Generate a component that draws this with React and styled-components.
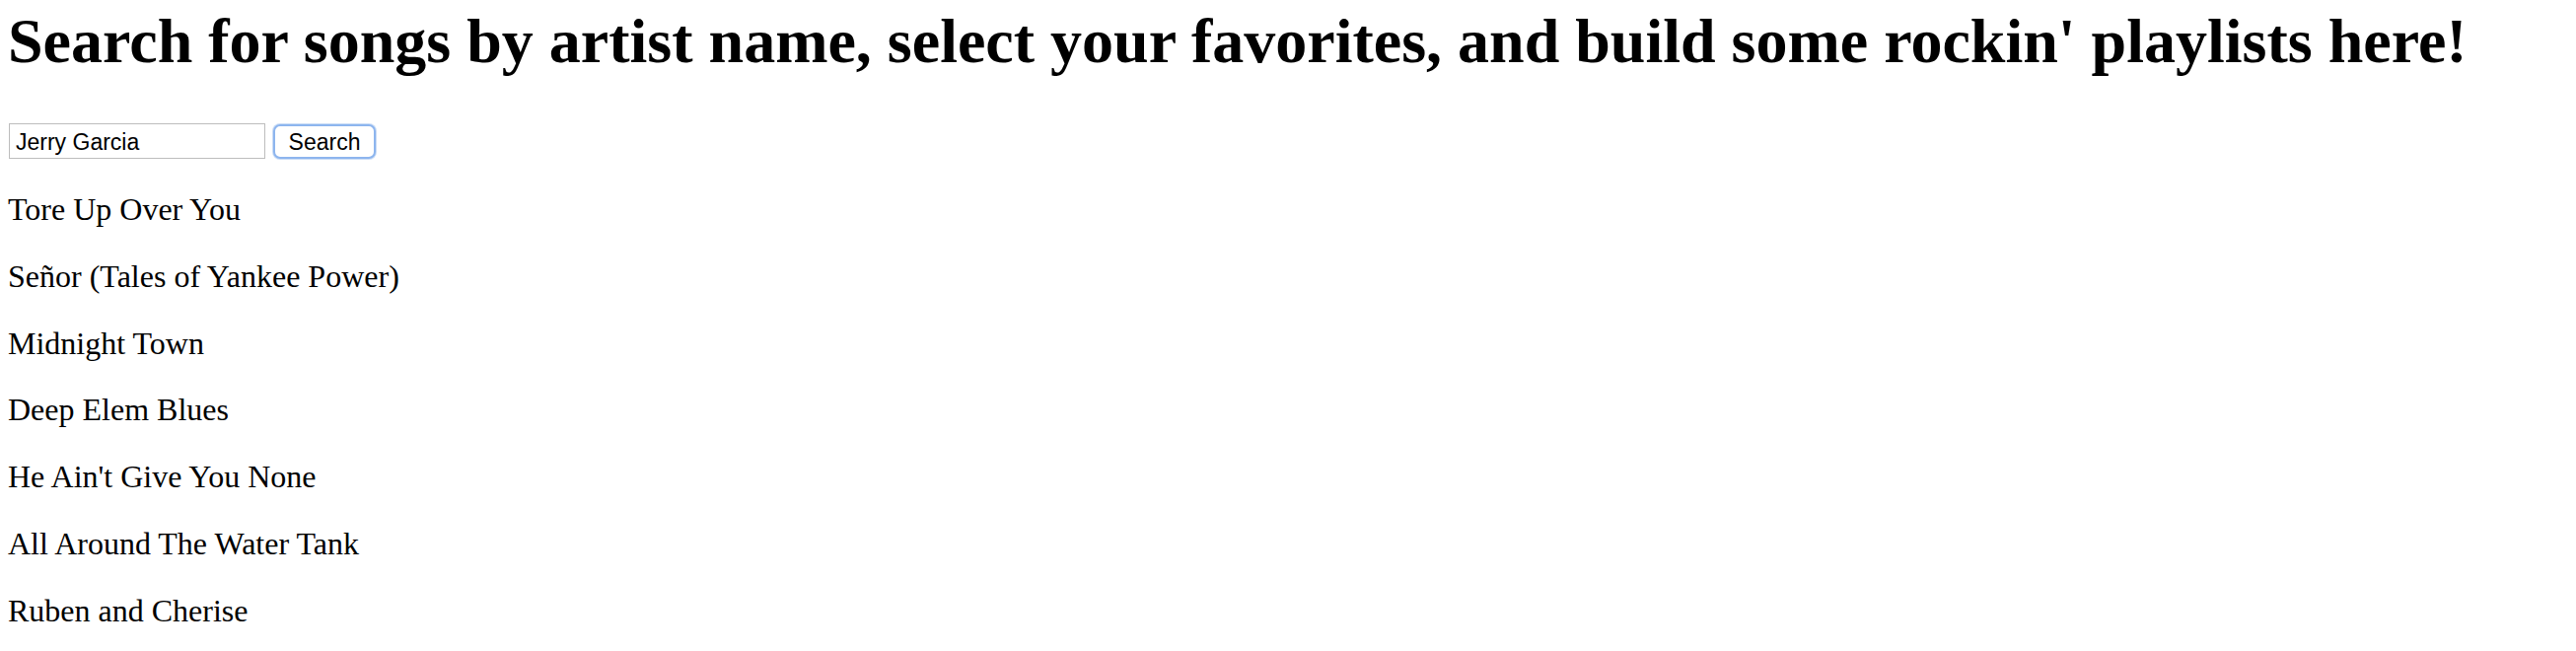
import React from "react";
import styled, { createGlobalStyle } from "styled-components";

const GlobalStyle = createGlobalStyle`
  html, body { margin: 0; padding: 0; background: #ffffff; }
  body { font-family: "Liberation Serif", "Times New Roman", serif; color: #000; }
`;

const Page = styled.main`
  display: flex;
  flex-direction: column;
  padding: 6px 8px 0 8px;
`;

const Title = styled.h1`
  margin: 0;
  font-family: "Liberation Serif", "Times New Roman", serif;
  font-weight: 700;
  font-size: 64px;
  line-height: 72px;
  white-space: nowrap;
`;

const SearchForm = styled.form`
  display: flex;
  align-items: center;
  gap: 8px;
  margin-top: 47px;
  padding-left: 1px;
`;

const SearchInput = styled.input`
  box-sizing: border-box;
  width: 260px;
  height: 36px;
  padding: 2px 6px 0 6px;
  border: 1px solid #bdbdbd;
  border-radius: 0;
  font-family: "Liberation Sans", Arial, sans-serif;
  font-size: 23px;
  color: #000;
  outline: none;
`;

const SearchButton = styled.button`
  box-sizing: border-box;
  width: 104px;
  height: 35px;
  padding: 2px 0 0 0;
  background: #ffffff;
  border: 2px solid #8db5ee;
  border-radius: 7px;
  box-shadow: 0 0 0 1px rgba(140, 180, 235, 0.45);
  font-family: "Liberation Sans", Arial, sans-serif;
  font-size: 23px;
  color: #000;
`;

const SongList = styled.div`
  display: flex;
  flex-direction: column;
  gap: 32px;
  margin-top: 34px;
`;

const Song = styled.p`
  margin: 0;
  font-size: 32px;
  line-height: 35.8px;
`;

const songs = [
  "Tore Up Over You",
  "Señor (Tales of Yankee Power)",
  "Midnight Town",
  "Deep Elem Blues",
  "He Ain't Give You None",
  "All Around The Water Tank",
  "Ruben and Cherise",
];

export default function App() {
  return (
    <>
      <GlobalStyle />
      <Page>
        <Title>
          Search for songs by artist name, select your favorites, and build some rockin' playlists here!
        </Title>
        <SearchForm onSubmit={(e) => e.preventDefault()}>
          <SearchInput type="text" defaultValue="Jerry Garcia" />
          <SearchButton type="submit">Search</SearchButton>
        </SearchForm>
        <SongList>
          {songs.map((s) => (
            <Song key={s}>{s}</Song>
          ))}
        </SongList>
      </Page>
    </>
  );
}
